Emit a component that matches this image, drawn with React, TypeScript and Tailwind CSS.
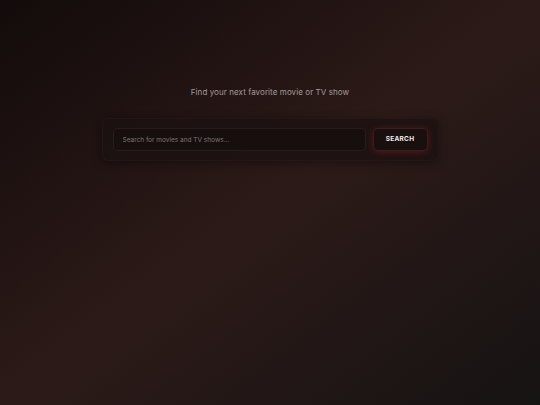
export default function App() {
  return (
    <div
      className="min-h-screen w-full bg-gradient-to-br from-[#130b0b] via-[#2c1a18] to-[#161313] flex flex-col items-center"
      style={{ fontFamily: "Inter, 'Noto Sans', sans-serif" }}
    >
      <p className="mt-[87px] text-[8px] leading-[11px] text-[#a39a99] tracking-[0.01em]">
        Find your next favorite movie or TV show
      </p>

      <div className="mt-[20px] w-[337px] rounded-[6px] bg-[#1b1111]/80 border border-[#2a1a19]/60 px-[10px] py-[9px] flex items-center gap-[7px] shadow-[0_2px_10px_rgba(0,0,0,0.35)]">
        <input
          type="text"
          placeholder="Search for movies and TV shows..."
          className="flex-1 h-[23px] rounded-[5px] bg-[#170e0e] border border-[#2b1b1a] px-[9px] text-[6.5px] text-[#d0c8c8] placeholder:text-[#7e7574] outline-none"
        />
        <button className="w-[55px] h-[23px] rounded-[5px] bg-[#1a0f0f] border border-[#3a1d1c] text-[6.5px] font-bold tracking-[0.04em] text-[#f1eded] shadow-[0_1px_6px_rgba(150,30,30,0.45)]">
          SEARCH
        </button>
      </div>
    </div>
  );
}
